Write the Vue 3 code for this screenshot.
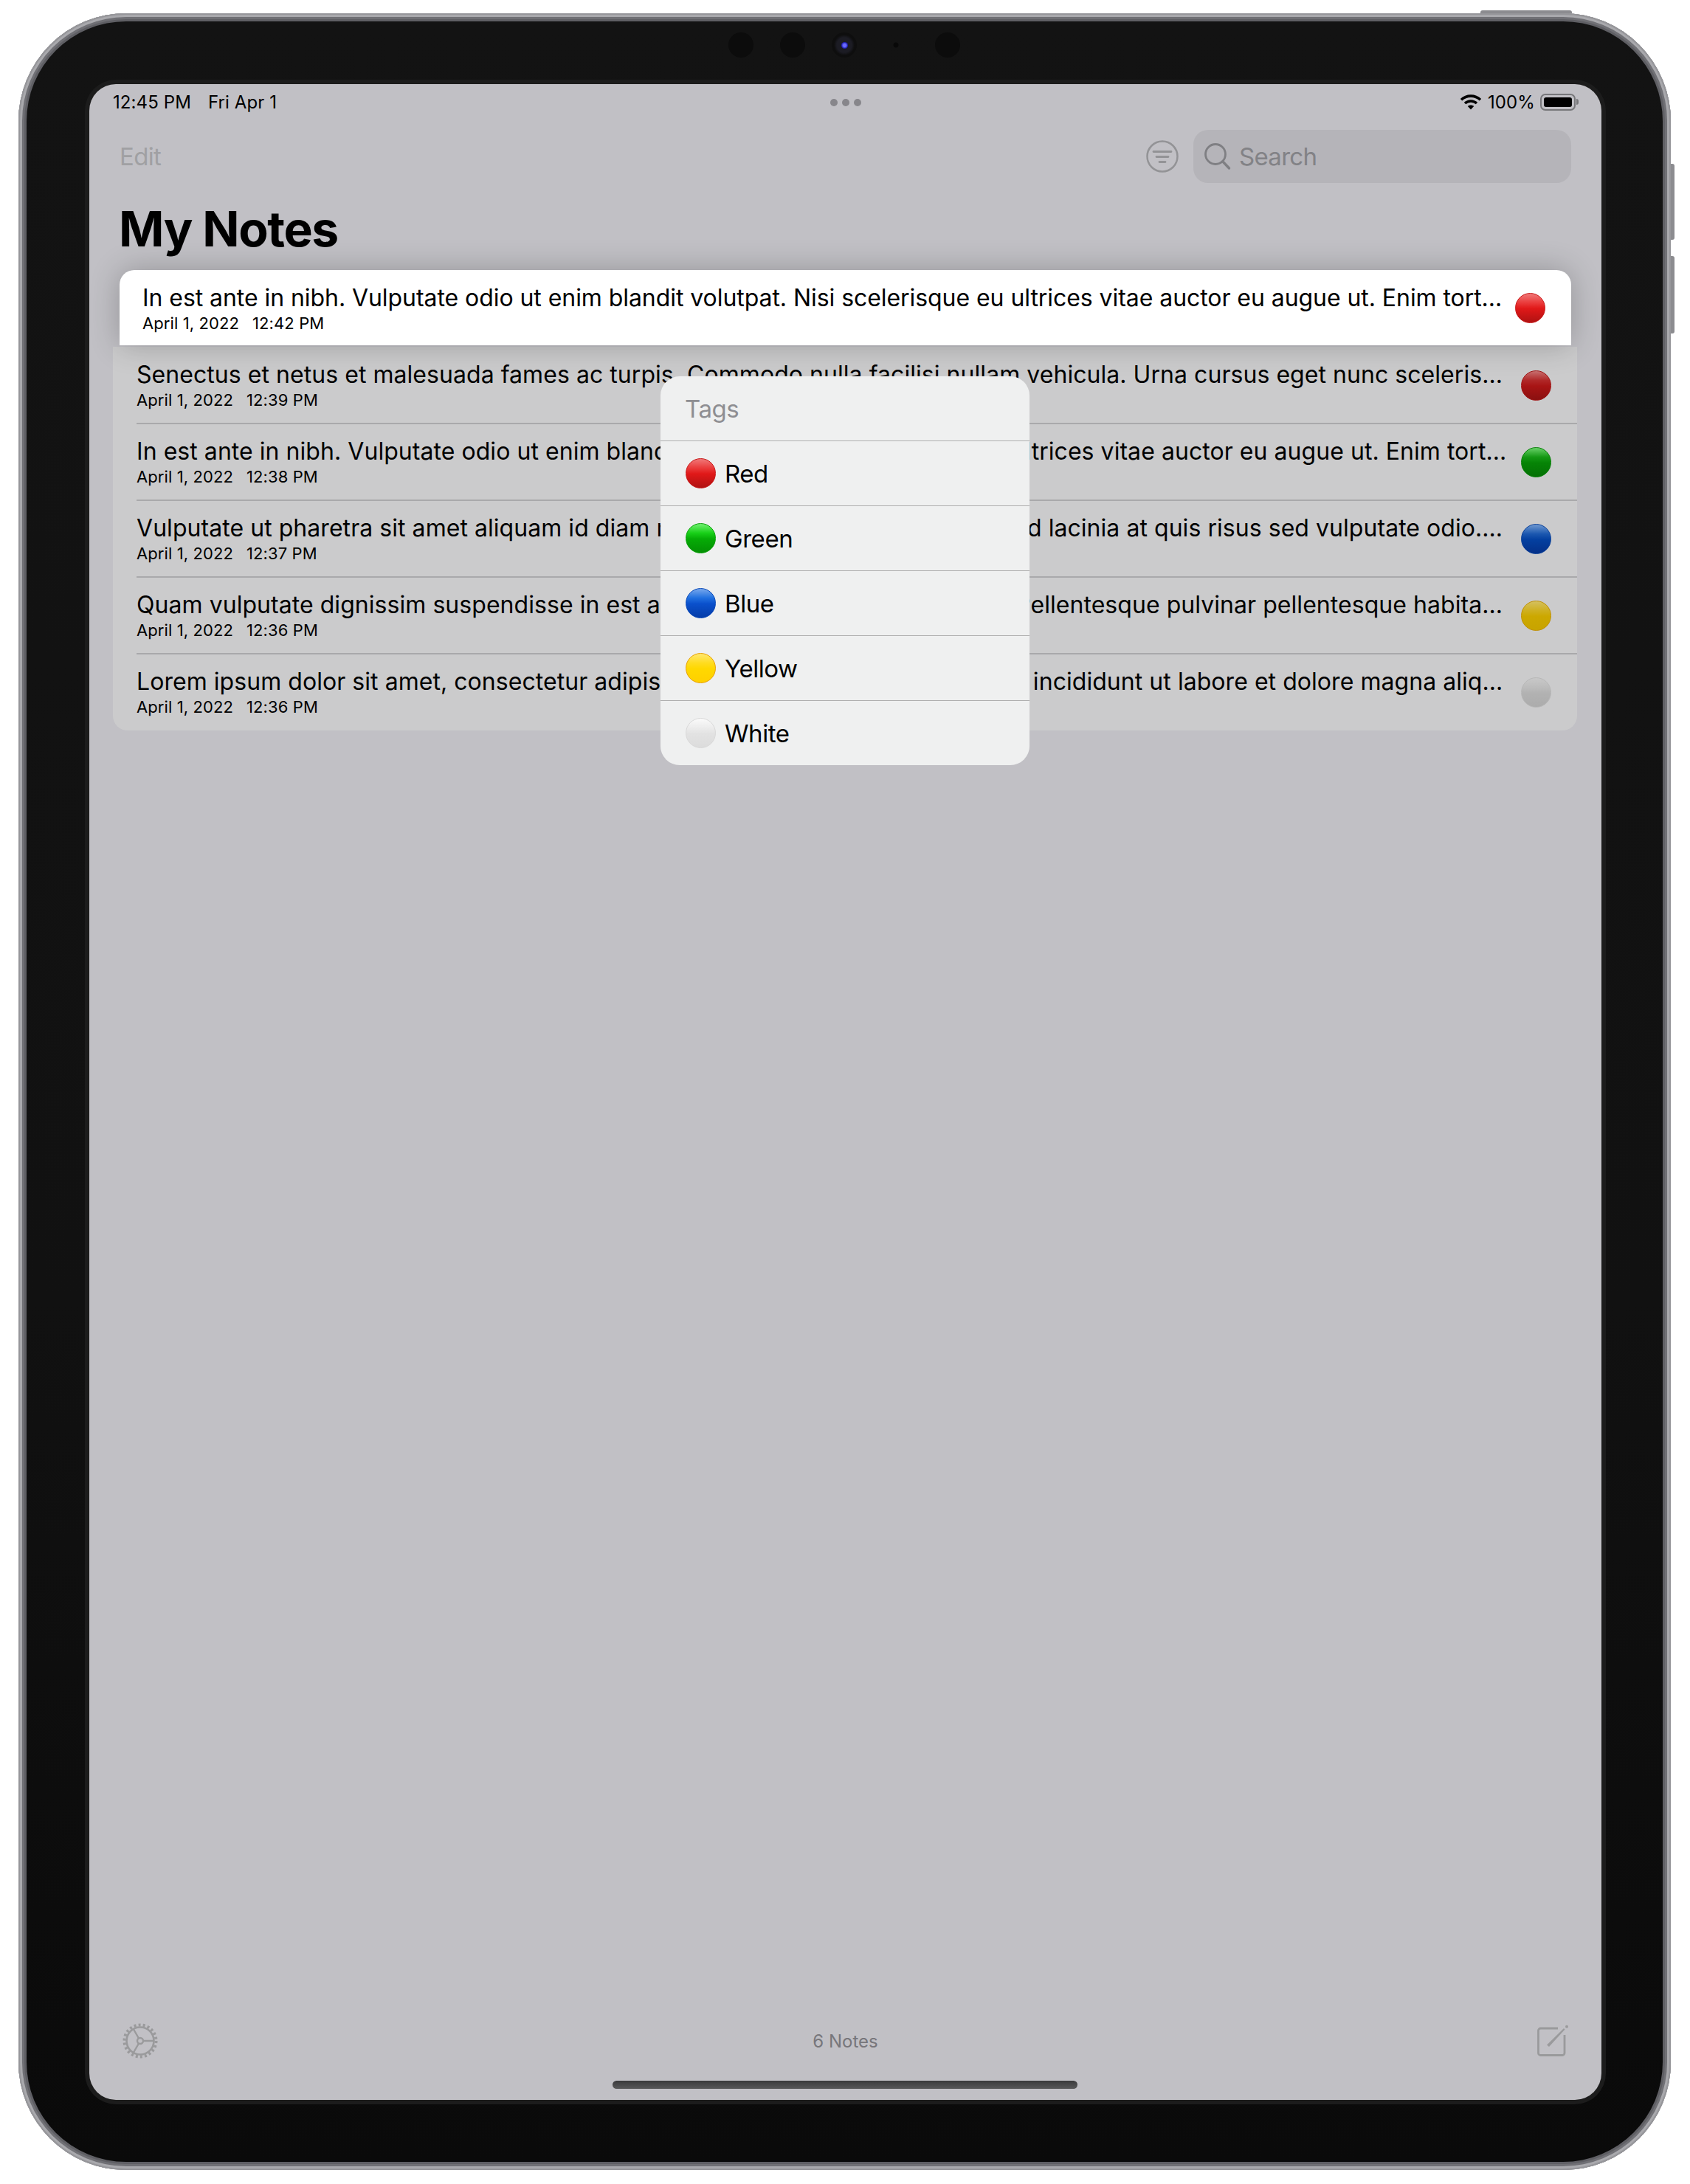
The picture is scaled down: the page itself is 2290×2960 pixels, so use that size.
<template>
  <div class="page">
    <div class="device">
      <span class="hw top-btn"></span>
      <span class="hw side-btn vol-up"></span>
      <span class="hw side-btn vol-down"></span>

      <div class="bezel">
        <div class="sensors">
          <span class="sensor"></span>
          <span class="sensor"></span>
          <span class="sensor camera"><i></i></span>
          <span class="sensor tiny"></span>
          <span class="sensor"></span>
        </div>

        <div class="screen">
          <div class="statusbar">
            <div class="status-left"><span>12:45 PM</span><span>Fri Apr 1</span></div>
            <div class="status-dots"><i></i><i></i><i></i></div>
            <div class="status-right">
              <svg class="wifi" width="30" height="22" viewBox="0 0 30 22">
                <path d="M2 8.2C9.2 1.4 20.8 1.4 28 8.2" fill="none" stroke="#000" stroke-width="3.6" />
                <path d="M7 13C11.600 8.900 18.400 8.900 23 13" fill="none" stroke="#000" stroke-width="3.6" />
                <path d="M15 21.500 10.800 17C13.200 15 16.800 15 19.200 17Z" fill="#000" />
              </svg>
              <span>100%</span>
              <div class="battery"><i></i></div>
              <span class="battery-nub"></span>
            </div>
          </div>

          <div class="navbar">
            <span class="edit">Edit</span>
            <svg class="filter" width="46" height="46" viewBox="0 0 46 46">
              <circle cx="23" cy="23" r="20.500" fill="none" stroke="#939396" stroke-width="2.500" />
              <path d="M11 16.500H35M15 23.500H31M19 30.500H27" fill="none" stroke="#939396" stroke-width="2.800" stroke-linecap="round" />
            </svg>
            <div class="search">
              <svg width="38" height="38" viewBox="0 0 38 38">
                <circle cx="16" cy="16" r="13.500" fill="none" stroke="#7f7f83" stroke-width="2.800" />
                <path d="M26 26 34.500 35" fill="none" stroke="#7f7f83" stroke-width="3.400" stroke-linecap="round" />
              </svg>
              <span>Search</span>
            </div>
          </div>

          <h1 class="title">My Notes</h1>

          <div class="card">
            <div class="note-text">
              <div class="note-title">{{ selected.title }}</div>
              <div class="note-date"><span>{{ selected.date }}</span><span>{{ selected.time }}</span></div>
            </div>
            <span class="marble" :class="selected.tag"></span>
          </div>

          <div class="list">
            <div v-for="note in notes" :key="note.time + note.tag" class="row">
              <div class="note-text">
                <div class="note-title">{{ note.title }}</div>
                <div class="note-date"><span>{{ note.date }}</span><span>{{ note.time }}</span></div>
              </div>
              <span class="marble dim" :class="note.tag"></span>
            </div>
          </div>

          <div class="toolbar">
            <svg class="gear" width="50" height="50" viewBox="0 0 50 50">
              <circle cx="25" cy="25" r="21.500" fill="none" stroke="#9a9a9c" stroke-width="4" stroke-dasharray="3 3.140" />
              <circle cx="25" cy="25" r="18.500" fill="none" stroke="#9a9a9c" stroke-width="2.600" />
              <circle cx="25" cy="25" r="4" fill="none" stroke="#9a9a9c" stroke-width="2.400" />
              <path d="M29 25H43.500M23 21.500 15.800 9M23 28.500 15.800 41" fill="none" stroke="#9a9a9c" stroke-width="2.400" />
            </svg>
            <span class="count">6 Notes</span>
            <svg class="compose" width="44" height="44" viewBox="0 0 44 44">
              <path d="M29 5H5.500A3 3 0 0 0 2.500 8V38.500A3 3 0 0 0 5.500 41.500H35A3 3 0 0 0 38 38.500V14" fill="none" stroke="#9a9a9c" stroke-width="2.800" />
              <path d="M14 27.500 37 5 38.500 6.500 17 30Z" fill="#9a9a9c" />
              <circle cx="41" cy="2.800" r="2" fill="#9a9a9c" />
            </svg>
          </div>

          <div class="home-indicator"></div>

          <div class="popup">
            <div class="popup-head">Tags</div>
            <div v-for="tag in tags" :key="tag.id" class="popup-row">
              <span class="marble" :class="tag.id"></span>
              <span>{{ tag.label }}</span>
            </div>
          </div>
        </div>
      </div>
    </div>
  </div>
</template>

<script setup>
const selected = {
  title: 'In est ante in nibh. Vulputate odio ut enim blandit volutpat. Nisi scelerisque eu ultrices vitae auctor eu augue ut. Enim tort...',
  date: 'April 1, 2022',
  time: '12:42 PM',
  tag: 'red'
}

const notes = [
  {
    title: 'Senectus et netus et malesuada fames ac turpis. Commodo nulla facilisi nullam vehicula. Urna cursus eget nunc sceleris...',
    date: 'April 1, 2022',
    time: '12:39 PM',
    tag: 'red'
  },
  {
    title: 'In est ante in nibh. Vulputate odio ut enim blandit volutpat. Nisi scelerisque eu ultrices vitae auctor eu augue ut. Enim tort...',
    date: 'April 1, 2022',
    time: '12:38 PM',
    tag: 'green'
  },
  {
    title: 'Vulputate ut pharetra sit amet aliquam id diam maecenas ultricies mi eget ut. Sed lacinia at quis risus sed vulputate odio....',
    date: 'April 1, 2022',
    time: '12:37 PM',
    tag: 'blue'
  },
  {
    title: 'Quam vulputate dignissim suspendisse in est ante in nibh mauris cursus vitae. Pellentesque pulvinar pellentesque habita...',
    date: 'April 1, 2022',
    time: '12:36 PM',
    tag: 'yellow'
  },
  {
    title: 'Lorem ipsum dolor sit amet, consectetur adipiscing elit, sed do eiusmod tempor incididunt ut labore et dolore magna aliq...',
    date: 'April 1, 2022',
    time: '12:36 PM',
    tag: 'white'
  }
]

const tags = [
  { id: 'red', label: 'Red' },
  { id: 'green', label: 'Green' },
  { id: 'blue', label: 'Blue' },
  { id: 'yellow', label: 'Yellow' },
  { id: 'white', label: 'White' }
]
</script>

<style>
html,
body {
  background: #fff;
}
</style>

<style scoped>
.page {
  width: 2290px;
  height: 2960px;
  padding: 18px 0 0 25px;
  box-sizing: border-box;
  font-family: Inter, "Liberation Sans", sans-serif;
  color: #000;
}

.device {
  position: relative;
  width: 2239px;
  height: 2923px;
  padding: 11px;
  box-sizing: border-box;
  border-radius: 146px;
  background: #5f5f64;
  box-shadow: inset 0 0 0 2px #96969a, inset 0 0 0 5px #a9a9ad, inset 0 0 0 8px #707075;
}

.hw {
  position: absolute;
  background: #8c8c90;
}

.top-btn {
  top: -4px;
  left: 1981px;
  width: 124px;
  height: 4px;
  border-radius: 3px 3px 0 0;
}

.side-btn {
  right: -5px;
  width: 5px;
  border-radius: 0 3px 3px 0;
}

.vol-up {
  top: 204px;
  height: 103px;
}

.vol-down {
  top: 329px;
  height: 105px;
}

.bezel {
  position: relative;
  height: 100%;
  box-sizing: border-box;
  padding: 85px 83px 84px 85px;
  border-radius: 135px;
  background: linear-gradient(#131313 0%, #111 60%, #0a0a0a 100%);
}

.sensors {
  position: absolute;
  top: 15px;
  left: 951px;
  display: flex;
  gap: 36px;
}

.sensor {
  display: flex;
  align-items: center;
  justify-content: center;
  width: 34px;
  height: 34px;
  border-radius: 50%;
  background: #0c0c0c;
}

.sensor.tiny {
  background: radial-gradient(circle, #080808 0 3px, transparent 4px);
}

.sensor.camera {
  background: radial-gradient(circle, #1c1c24 0 10px, #0e0e0e 14px);
}

.sensor.camera i {
  width: 9px;
  height: 9px;
  border-radius: 50%;
  background: radial-gradient(circle, #6a6aff 0 2px, #2020b0 4px);
}

.screen {
  position: relative;
  display: flex;
  flex-direction: column;
  height: 2732px;
  border-radius: 36px;
  background: #c1c0c5;
  box-shadow: 0 0 0 6px #1c1c1c;
  overflow: hidden;
}

.statusbar {
  display: grid;
  grid-template-columns: 1fr auto 1fr;
  align-items: center;
  height: 48px;
  padding: 0 31px 0 32px;
  font-size: 24px;
  letter-spacing: 0.1px;
}

.status-left {
  display: flex;
  gap: 23px;
}

.status-dots {
  display: flex;
  gap: 6px;
  margin-top: 2px;
}

.status-dots i {
  width: 10px;
  height: 10px;
  border-radius: 50%;
  background: #87868b;
}

.status-right {
  display: flex;
  align-items: center;
  justify-content: flex-end;
}

.wifi {
  margin-right: 8px;
}

.battery {
  width: 48px;
  height: 23px;
  margin-left: 7px;
  padding: 3px;
  box-sizing: border-box;
  border: 2px solid #77777a;
  border-radius: 7px;
}

.battery i {
  display: block;
  height: 100%;
  border-radius: 3px;
  background: #000;
}

.battery-nub {
  width: 3px;
  height: 8px;
  margin-left: 1px;
  border-radius: 0 3px 3px 0;
  background: #77777a;
}

.navbar {
  display: flex;
  align-items: center;
  height: 72px;
  margin-top: 14px;
  padding: 0 41px;
  font-size: 33px;
  letter-spacing: -0.7px;
}

.edit {
  color: #a0a0a3;
  margin-right: auto;
}

.filter {
  margin-right: 19px;
}

.search {
  display: flex;
  align-items: center;
  gap: 10px;
  width: 512px;
  height: 72px;
  padding-left: 14px;
  box-sizing: border-box;
  border-radius: 20px;
  background: #b5b4b9;
  color: #828286;
}

.title {
  height: 118px;
  margin: 0;
  padding: 21px 0 0 40px;
  box-sizing: border-box;
  font-size: 66px;
  line-height: 82px;
  font-weight: 700;
  letter-spacing: -1.4px;
}

.card,
.row {
  display: flex;
  align-items: center;
  height: 104px;
  box-sizing: border-box;
}

.card {
  position: relative;
  z-index: 1;
  height: 102px;
  margin: 0 41px 2px;
  padding: 0 35px 0 31px;
  border-radius: 20px 20px 0 0;
  background: #fff;
  box-shadow: 0 0 40px rgba(0, 0, 0, 0.24);
}

.card .note-title {
  letter-spacing: -0.06px;
}

.card .marble {
  margin-left: 8px;
}

.list {
  margin: 0 33px 0 32px;
  border-radius: 0 0 20px 20px;
  background: #cbcbcc;
}

.row {
  padding: 0 35px 0 32px;
  position: relative;
}

.row + .row::before {
  content: "";
  position: absolute;
  top: -1px;
  left: 32px;
  right: 0;
  height: 2px;
  background: #a9a9ab;
}

.note-text {
  flex: 1;
  min-width: 0;
  align-self: flex-start;
  padding-top: 19px;
}

.note-title {
  font-size: 32px;
  line-height: 38px;
  white-space: nowrap;
  overflow: hidden;
  letter-spacing: 0.05px;
}

.note-date {
  display: flex;
  gap: 18px;
  margin-top: 2px;
  font-size: 22px;
  line-height: 26px;
  letter-spacing: 0.1px;
}

.marble {
  flex: none;
  width: 41px;
  height: 41px;
  margin-left: 12px;
  border-radius: 50%;
  box-sizing: border-box;
  border: 1px solid var(--rim);
  background: linear-gradient(var(--hi) 0%, var(--hi2) 32%, var(--mid) 52%, var(--low) 100%);
}

.marble.red {
  --rim: #c81818;
  --hi: #f07878;
  --hi2: #ea3a3a;
  --mid: #e01818;
  --low: #b01212;
}

.marble.green {
  --rim: #08a008;
  --hi: #70f070;
  --hi2: #18d018;
  --mid: #06ac06;
  --low: #049004;
}

.marble.blue {
  --rim: #0848b8;
  --hi: #78a8ec;
  --hi2: #2070e0;
  --mid: #0a50cc;
  --low: #043ca8;
}

.marble.yellow {
  --rim: #e8a000;
  --hi: #ffe870;
  --hi2: #ffdc20;
  --mid: #ffd800;
  --low: #ffd000;
}

.marble.white {
  --rim: #d8d8d8;
  --hi: #fafafa;
  --hi2: #ececec;
  --mid: #e2e2e2;
  --low: #dcdcdc;
}

.marble.dim.red {
  --rim: #a01414;
  --hi: #c87070;
  --hi2: #b02828;
  --mid: #a81414;
  --low: #8a1010;
}

.marble.dim.green {
  --rim: #088008;
  --hi: #68d068;
  --hi2: #149814;
  --mid: #068406;
  --low: #047004;
}

.marble.dim.blue {
  --rim: #0a4098;
  --hi: #6e98d0;
  --hi2: #1c58b0;
  --mid: #0440a0;
  --low: #043088;
}

.marble.dim.yellow {
  --rim: #c09000;
  --hi: #d4c060;
  --hi2: #cfb020;
  --mid: #cca800;
  --low: #c8a400;
}

.marble.dim.white {
  --rim: #b8b8b8;
  --hi: #c8c8c8;
  --hi2: #bcbcbc;
  --mid: #b2b2b2;
  --low: #acacac;
}

.toolbar {
  display: grid;
  grid-template-columns: 1fr auto 1fr;
  align-items: center;
  height: 96px;
  margin-top: auto;
  margin-bottom: 32px;
  padding: 0 44px;
}

.compose {
  justify-self: end;
}

.count {
  font-size: 24px;
  color: #77767b;
}

.home-indicator {
  position: absolute;
  left: 709px;
  bottom: 15px;
  width: 630px;
  height: 11px;
  border-radius: 6px;
  background: linear-gradient(#3a3a3c, #58585a);
}

.popup {
  position: absolute;
  z-index: 2;
  top: 396px;
  left: 774px;
  width: 500px;
  border-radius: 26px;
  background: #eff0f0;
  overflow: hidden;
  font-size: 33px;
  letter-spacing: -0.45px;
}

.popup-head {
  height: 87px;
  padding: 0 33px;
  line-height: 88px;
  color: #8e8e92;
}

.popup-row {
  display: flex;
  align-items: center;
  height: 88px;
  box-sizing: border-box;
  padding-left: 34px;
  border-top: 1.5px solid #aeaeae;
}

.popup-row .marble {
  margin: 0 12px 0 0;
}
</style>
